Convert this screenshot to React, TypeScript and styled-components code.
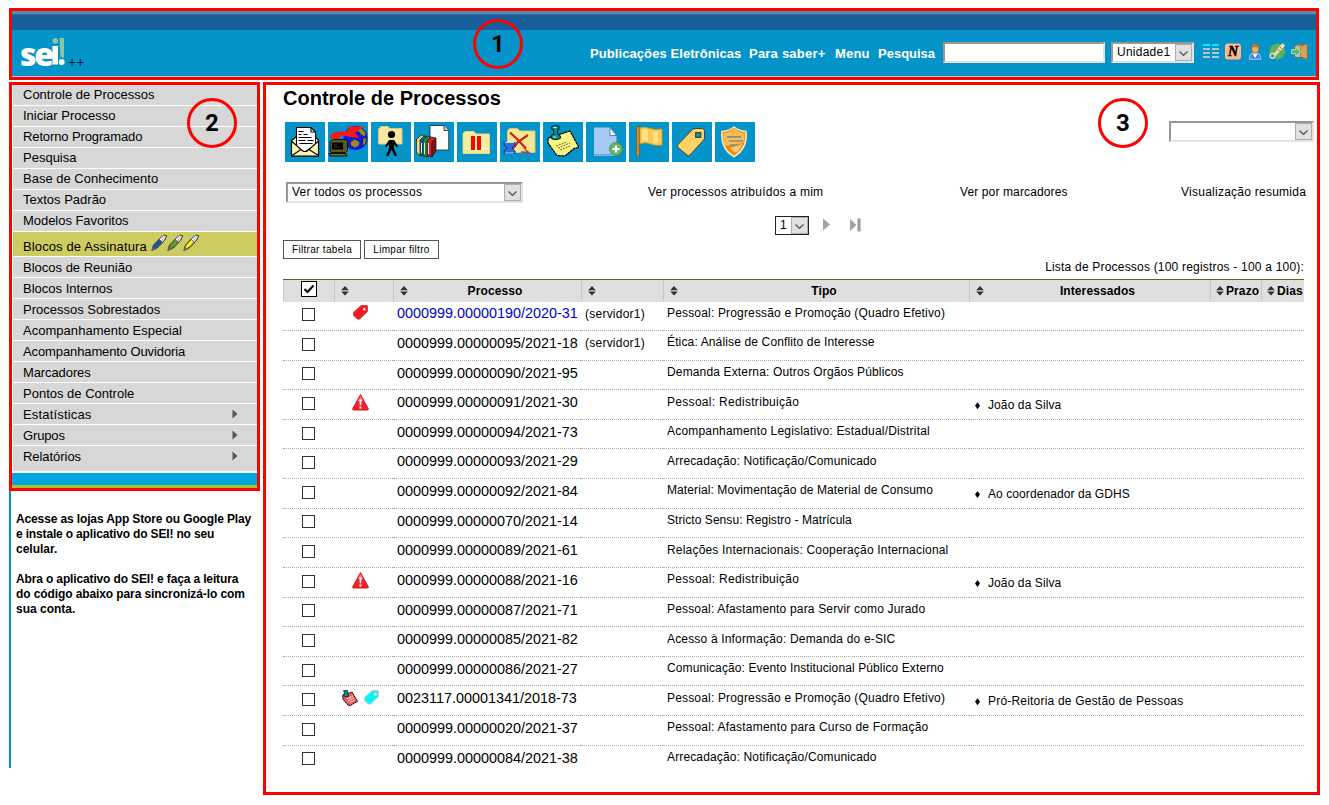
import React from "react";
import styled, { createGlobalStyle, css } from "styled-components";

const RED = "#ff0000";

const GlobalStyle = createGlobalStyle`
  * { box-sizing: border-box; }
  body {
    margin: 0;
    background: #fff;
    color: #000;
    font-family: "Liberation Sans", Arial, sans-serif;
    font-size: 12px;
    overflow: hidden;
  }
`;

/* ---------- page frame ---------- */

const Page = styled.div`
  width: 1329px;
  height: 805px;
  padding: 8px 9px 0;
`;

const Header = styled.header`
  position: relative;
  width: 1310px;
  height: 72px;
  border: 3px solid ${RED};
  background: #0594c9;
  display: flex;
  flex-direction: column;
`;

const TopStripe = styled.div`
  height: 19px;
  flex: none;
  background: #175f9a;
  border-top: 3px solid #5a89b0;
  box-shadow: inset 0 1px 0 #2f6fa5;
`;

const HeaderBar = styled.div`
  flex: 1;
  display: flex;
  align-items: flex-start;
  border-bottom: 1px solid #b9c9d2;
`;

const Brand = styled.div`
  display: flex;
  align-items: flex-start;
  width: 578px;
  padding: 7px 0 0 8px;
`;

const BrandPlus = styled.span`
  font-size: 14px;
  line-height: 16px;
  margin: 17px 0 0 2px;
  color: #06202b;
`;

const TopNav = styled.nav`
  display: flex;
  padding-top: 16px;
  color: #fff;
  font-weight: bold;
  font-size: 13px;
  line-height: 16px;
`;

const NavLink = styled.a<{ $w: number; $ls?: number }>`
  width: ${(p) => p.$w}px;
  white-space: nowrap;
  letter-spacing: ${(p) => p.$ls ?? 0.08}px;
`;

const insetBorder = css`
  border: 2px solid;
  border-color: #979797 #e3e3e3 #e3e3e3 #979797;
`;

const SearchInput = styled.input`
  ${insetBorder}
  width: 162px;
  height: 21px;
  margin-top: 12px;
  padding: 0 4px;
  background: #fff;
  outline: none;
`;

const SelectBox = styled.div<{ $w: number; $h?: number; $plain?: boolean }>`
  ${insetBorder}
  ${(p) => p.$plain && css`border: 1px solid #222;`}
  width: ${(p) => p.$w}px;
  height: ${(p) => p.$h ?? 21}px;
  flex: none;
  display: flex;
  justify-content: space-between;
  background: #fff;
  font-size: 12px;
  line-height: 17px;
  letter-spacing: 0.25px;
  padding-left: 4px;
`;

const SelectArrow = styled.span`
  width: 17px;
  height: 17px;
  flex: none;
  display: flex;
  align-items: center;
  justify-content: center;
  padding-top: 1px;
  background: #e1e1e1;
  border: 1px solid #adadad;
`;

const HeaderSelect = styled.div`
  margin: 12px 0 0 6px;
`;

const HeaderIcons = styled.div`
  display: flex;
  gap: 5px;
  margin: 13px 0 0 9px;
`;

const Columns = styled.div`
  display: flex;
  gap: 3px;
  align-items: flex-start;
  padding-top: 2px;
`;

/* ---------- sidebar ---------- */

const Sidebar = styled.aside`
  width: 251px;
`;

const MenuFrame = styled.div`
  position: relative;
  border: 3px solid ${RED};
  height: 409px;
  display: flex;
  flex-direction: column;
`;

const MenuList = styled.ul`
  list-style: none;
  margin: 0 0 0 1px;
  padding: 0;
`;

const MenuItem = styled.li<{ $active?: boolean; $last?: boolean; $low?: boolean; $ls?: number }>`
  display: flex;
  align-items: ${(p) => (p.$active ? "flex-end" : "flex-start")};
  height: ${(p) => (p.$active ? 25 : p.$last ? 27 : 21)}px;
  border-bottom: ${(p) => (p.$last ? 2 : 1)}px solid #fff;
  background: ${(p) => (p.$active ? "#cccc60" : "#d7d7d7")};
  padding: ${(p) => (p.$low ? 2 : 1)}px 19px 0 10px;
  font-size: 13px;
  line-height: ${(p) => (p.$active ? 19 : 18)}px;
  letter-spacing: ${(p) => p.$ls ?? 0}px;
`;

const Caret = styled.svg`
  margin: 3px 0 0 auto;
`;

const Pens = styled.span`
  display: flex;
  align-self: flex-start;
  margin: 1px 0 0 4px;
`;

const MenuFooter = styled.div`
  flex: 1;
  background: #02a5de;
  border-bottom: 3px solid #a2c62b;
`;

const AppNotice = styled.div`
  height: 277px;
  border-left: 2px solid #0594c9;
  padding: 21px 0 0 5px;
  font-weight: bold;
  font-size: 12px;
  line-height: 15px;
  white-space: nowrap;
  p { margin: 0 0 15px; }
`;

const NoticeLine = styled.span<{ $ls?: number }>`
  display: block;
  letter-spacing: ${(p) => p.$ls ?? 0}px;
`;

/* ---------- content ---------- */

const Content = styled.main`
  position: relative;
  width: 1057px;
  height: 713px;
  border: 3px solid ${RED};
  padding: 0 3px 0 17px;
`;

const Title = styled.h1`
  margin: 0;
  padding-top: 1px;
  height: 37px;
  font-size: 20px;
  line-height: 24px;
`;

const ToolRow = styled.div`
  display: flex;
  justify-content: space-between;
  align-items: flex-start;
  height: 60px;
  padding-left: 2px;
`;

const Tools = styled.div`
  display: flex;
  gap: 3px;
`;

const Tool = styled.button`
  width: 40px;
  height: 40px;
  padding: 0;
  border: 0;
  background: #0594c9;
  svg { display: block; }
`;

const SideSelect = styled.div`
  margin-top: -1px;
`;

const ViewRow = styled.div`
  display: flex;
  align-items: flex-start;
  height: 34px;
  padding-left: 3px;
`;

const ViewLink = styled.a<{ $gap: number; $w: number; $ls: number }>`
  margin-left: ${(p) => p.$gap}px;
  width: ${(p) => p.$w}px;
  line-height: 21px;
  white-space: nowrap;
  letter-spacing: ${(p) => p.$ls}px;
`;

const Pager = styled.div`
  display: flex;
  height: 24px;
  padding-left: 492px;
`;

const PagerIcon = styled.svg<{ $gap: number }>`
  margin: 2px 0 0 ${(p) => p.$gap}px;
`;

const Filters = styled.div`
  display: flex;
  gap: 3px;
`;

const FilterButton = styled.button<{ $w: number }>`
  width: ${(p) => p.$w}px;
  height: 19px;
  padding: 0;
  background: #fff;
  border: 1px solid #555;
  font: 10px/17px "Liberation Sans", Arial, sans-serif;
  letter-spacing: 0.32px;
  white-space: nowrap;
`;

const Caption = styled.div`
  height: 20px;
  line-height: 16px;
  text-align: right;
  padding-right: 10px;
  letter-spacing: 0.2px;
`;

const Table = styled.div`
  width: 1021px;
  border-top: 1px solid #4d6b0f;
`;

const gridColumns = css`
  display: grid;
  grid-template-columns: 51px 59px 188px 82px 306px 241px 51px 43px;
`;

const HeadRow = styled.div`
  ${gridColumns}
  height: 22px;
  margin-bottom: -0.6px;
  background: #dfdfdf;
  font-weight: bold;
`;

const HeadCell = styled.div<{ $tight?: boolean }>`
  display: flex;
  align-items: flex-start;
  height: 21px;
  border-left: 1px dotted #b5b5b5;
  padding: 2px 0 0 ${(p) => (p.$tight ? 6 : 7)}px;
  line-height: 18px;
  > svg { flex: none; margin: 4px 0 0 -1px; }
`;

const HeadLabel = styled.span<{ $tight?: boolean }>`
  flex: 1;
  text-align: ${(p) => (p.$tight ? "left" : "center")};
  padding-left: ${(p) => (p.$tight ? 2 : 1)}px;
  letter-spacing: 0.1px;
`;

const Row = styled.div`
  ${gridColumns}
  height: 29.62px;
  line-height: 16px;
  &:last-child > * { border-bottom-color: transparent; }
`;

const Cell = styled.div<{ $top?: number; $ls?: number }>`
  display: flex;
  align-items: flex-start;
  border-bottom: 1px dotted #aaa;
  padding: ${(p) => p.$top ?? 4}px 0 0 4px;
  letter-spacing: ${(p) => p.$ls ?? 0}px;
  white-space: nowrap;
`;

const CheckCell = styled(Cell)`
  padding: 6.8px 0 0 19px;
  margin-right: 1px;
`;

const IconCell = styled(Cell)`
  justify-content: center;
  gap: 6px;
  padding: 4px 6px 0 0;
`;

const NumberCell = styled(Cell)<{ $visited?: boolean }>`
  font-size: 14.4px;
  color: ${(p) => (p.$visited ? "#0000cc" : "#000")};
`;

const Check = styled.span`
  width: 13px;
  height: 13px;
  border: 1px solid #333;
  background: #fff;
`;

const CheckAll = styled.div`
  width: 16px;
  height: 16px;
  margin: -1px 0 0 10px;
  border: 1px solid #000;
  background: #fff;
  svg { display: block; }
`;

const Bullet = styled.i`
  width: 5px;
  height: 7px;
  margin: 5px 8px 0 2px;
  background: #000;
  clip-path: polygon(50% 0, 100% 50%, 50% 100%, 0 50%);
`;

const Marker = styled.div<{ $x: number; $y: number }>`
  position: absolute;
  left: ${(p) => p.$x}px;
  top: ${(p) => p.$y}px;
  width: 50px;
  height: 50px;
  border: 3px solid ${RED};
  border-radius: 50%;
  display: flex;
  align-items: center;
  justify-content: center;
  font: bold 24px/44px Roboto, sans-serif;
`;

/* ---------- drawings ---------- */

const Chevron = () => (
  <svg width="11" height="7" viewBox="0 0 11 7" fill="none" stroke="#555" strokeWidth="1.2">
    <path d="M1.5 1.5 5.5 5.3 9.5 1.5" />
  </svg>
);

const Select = ({ label, ...rest }: { label: string; $w: number; $h?: number; $plain?: boolean }) => (
  <SelectBox {...rest}>
    <span>{label}</span>
    <SelectArrow><Chevron /></SelectArrow>
  </SelectBox>
);

const SortIcon = () => (
  <svg width="8" height="10" viewBox="0 0 8 10" fill="#2b3236">
    <path d="M4 0 7.8 4.200H.2zM4 9.6 7.8 5.4H.2z" />
  </svg>
);

const LogoBox = styled.div`
  display: flex;
  width: 46px;
  height: 30px;
`;

const LogoText = styled.span`
  color: #fff;
  font: 800 32px/34px "Open Sans", sans-serif;
  letter-spacing: -2.2px;
  width: 32px;
  white-space: nowrap;
`;

const Logo = () => (
  <LogoBox>
    <LogoText>se</LogoText>
    <svg width="13" height="30" viewBox="0 0 13 30">
      <path d="M7.500 1H12v20l-3.500-1z" fill="#8cc69c" />
      <circle cx="3.300" cy="3.800" r="2.800" fill="#8cc69c" />
      <path d="M.500 9H6v18.500H.500z" fill="#fff" />
      <circle cx="9.700" cy="25" r="2.900" fill="#fff" />
    </svg>
  </LogoBox>
);

const Pen = ({ color }: { color: string }) => (
  <svg width="16" height="18" viewBox="0 0 16 18">
    <path d="M.8 16.500 2.500 11 10.500 2.800Q14 .3 15.600 1.600 15.800 4.500 7.500 13 4 15.500.8 16.500z" fill="#d4dae0" stroke="#3a3a3a" strokeWidth="1" />
    <path d="M2.300 12 8.300 5.500 11 8 7 12.600 3 15z" fill={color} stroke="#333" strokeWidth=".6" />
    <path d="m9 5.500 4-3.500" stroke="#fff" />
  </svg>
);

const Tag = ({ fill, stroke }: { fill: string; stroke: string }) => (
  <svg width="15" height="15" viewBox="0 0 15 15">
    <path d="M8 .7h6.300v5.800L6.500 14H4.500L.7 10.500V7.500z" fill={fill} stroke={stroke} strokeWidth="1" />
    <path d="M10 2.800h2.700v2.700H10z" fill="#fff" stroke={stroke} strokeWidth=".5" />
  </svg>
);

const Warning = () => (
  <svg width="17" height="17" viewBox="0 0 17 17">
    <path d="M8.500.6 16.400 15 15.800 16H1.200L.6 15z" fill="#f5222c" stroke="#d81620" strokeLinejoin="round" />
    <path d="M8.500 2 11 7 6 7z" fill="#ff8a8a" />
    <path d="M7.400 5.500h2.200L9.200 11.300H7.800zM7.500 12.500h2v2h-2z" fill="#fff" />
  </svg>
);

const RedNote = () => (
  <svg width="16" height="16" viewBox="0 0 16 16">
    <path d="M.7 5 10 2l5.500 9.500-3 1.500-4 2.500-2.500-.3-5-6z" fill="#f55a62" stroke="#000" strokeDasharray="2 .4" />
    <path d="m5 9 6-3M6 11l6-3M8 12.500l5-2.500" stroke="#fff" strokeDasharray="2 .6" />
    <path d="M1.600.6h4v3h.8v3H2v-3h.8z" fill="#168c92" stroke="#003c40" strokeWidth=".9" />
  </svg>
);

const HeaderGlyphs = () => (
  <HeaderIcons>
    <svg width="17" height="17" viewBox="0 0 17 17" shapeRendering="crispEdges">
      <path d="M0 2h7M9 2h7" stroke="#00f0f5" strokeWidth="2" />
      <path d="M0 6h7M9 6h7M0 10h7M9 10h7M0 14h7M9 14h7" stroke="#b9c2c6" strokeWidth="2" />
    </svg>
    <svg width="17" height="17" viewBox="0 0 17 17">
      <rect x="0" y=".5" width="16" height="16" rx="3" fill="#fdb98e" />
      <text x="8" y="13.200" textAnchor="middle" fontFamily="Liberation Serif, serif" fontStyle="italic" fontWeight="bold" fontSize="14" stroke="#000" strokeWidth=".5">N</text>
    </svg>
    <svg width="17" height="17" viewBox="0 0 17 17">
      <path d="M2.500 16.300Q2.200 9.500 8 9.500t5.800 6.800z" fill="#4d87e6" stroke="#bcd4f5" strokeWidth=".8" />
      <path d="m5.500 10.500 2.600 4.500 2.600-4.500z" fill="#fff" />
      <ellipse cx="8.200" cy="5.800" rx="3.400" ry="4.200" fill="#f3ae55" stroke="#b06c1c" strokeWidth=".7" />
      <path d="M4.700 5Q5 .8 8.300.8t3.700 4.200Q8.500 2.800 4.700 5z" fill="#b5762c" />
    </svg>
    <svg width="17" height="17" viewBox="0 0 17 17">
      <circle cx="8.300" cy="8.600" r="7.800" fill="#5bb558" />
      <path d="M3 14 9 8.500" stroke="#ddd" strokeWidth="3" />
      <path d="M9.500 7.500 13.800 2.500" stroke="#f7dcc4" strokeWidth="3.600" strokeLinecap="round" />
      <path d="m8.500 6 3.500 3M11 4l2 2" stroke="#d2522b" />
      <circle cx="3.400" cy="12.800" r="2.300" fill="#3e8d41" stroke="#d7d7d7" strokeWidth="1.600" />
    </svg>
    <svg width="18" height="17" viewBox="0 0 18 17">
      <path d="M3.500 1H17v13.500H3.500z" fill="#79705a" />
      <path d="M5 2.500h6v11.500H5z" fill="#c4b998" />
      <path d="M9.500 3 16.200 1v15.400L9.500 13.500z" fill="#d0a25f" stroke="#94662a" strokeWidth=".6" />
      <path d="M.6 6.600h4V4l5 4.700-5 4.600v-2.600h-4z" fill="#5bb95c" stroke="#d6efd6" strokeWidth=".7" />
    </svg>
  </HeaderIcons>
);

const toolArt: { name: string; art: React.ReactNode }[] = [
  {
    name: "Enviar Processo",
    art: (
      <g stroke="#000" strokeWidth="1.1">
        <path d="M6.500 18.500 12 14h17l4.500 4V34h-27z" fill="#f6f2a0" />
        <path d="M11.500 26V5.500H26L30.500 10v13L20 30z" fill="#fff" />
        <path d="M26 5.500V10h4.500M13.500 9.500h5M13.500 12.500h3m2 0h4M13.500 15.500h13M13.500 18.500h7m2 0h6M14.500 21.500h13" fill="none" />
        <path d="M6.500 19v15h27V19L24 27.500l-2.500 2h-3L16 27.500z" fill="#f9f5ac" />
        <path d="m7 33.500 9-6M33.500 33.500 24 27.500" fill="none" />
      </g>
    ),
  },
  {
    name: "Atualizar Andamento",
    art: (
      <g>
        <circle cx="27.500" cy="16" r="12" fill="#0a18f4" />
        <path d="M27 4.500 34 6l4 5-1 4-4-2-2-3-5-1zM22 20l5-3 5 3-1 4-4 2-4-2zM35 16l3.500 0-1 6-3 2z" fill="#9b8137" stroke="#111" strokeWidth=".6" />
        <path d="M2 16q1-5 5-6l11-.500 3-3.500-1.500-1.500L36 4.500 27 11l4.500 5-9-1-8-1.500-6 4z" fill="#fb1515" />
        <path d="M2 19.500 5 17.500h13l1.500 2v9l-2 2H3l-1-2z" fill="#5b5a1c" stroke="#111" />
        <path d="M4 20.500h11v7H4z" fill="#050505" />
        <path d="M1 31.500h17l1 2.500H2z" fill="#77712e" stroke="#111" />
        <path d="m6 23 3 0M6 25h5" stroke="#2c3f1b" />
      </g>
    ),
  },
  {
    name: "Atribuição de Processos",
    art: (
      <g>
        <path d="M7.500 7 10 4.500h7l2 2h12V22H7.500z" fill="#f5e6a0" stroke="#dcc878" />
        <circle cx="20.500" cy="12.500" r="3.600" />
        <path d="M18 18h5l4 6-1 1.200-3-3v4.300l3 7-2.200.7-3.300-6.500-3.300 6.500-2.200-.7 3-7v-4.300l-3 3-1-1.200z" />
      </g>
    ),
  },
  {
    name: "Incluir Documento",
    art: (
      <g stroke="#222" strokeWidth=".8">
        <path d="M16 3.500h14l4.700 5V28H16z" fill="#fff" />
        <path d="M30 3.500v5h4.700" fill="#cfcfcf" />
        <path d="m2.500 17 5-4 3.500 1-3 4v16l-5-2z" fill="#e8d850" />
        <path d="m6 18 4-4 4 1-3 3v16l-5-1z" fill="#135cc8" />
        <path d="m9 18 4-4 4 1-3 3v17l-5-1z" fill="#0e9430" />
        <path d="m13 19 4-4 5 1-4 4v15l-5-2z" fill="#e01924" />
        <path d="m18 20 4-4v13l-4 6z" fill="#8d0c14" />
        <path d="M4 20v10M7.500 21v10M10.500 21v11M14.500 21v11" stroke="#fff" strokeWidth=".9" />
      </g>
    ),
  },
  {
    name: "Sobrestar Processo",
    art: (
      <g>
        <path d="M6 11.500 8 9.500h9l2 2.500h13.500v19.500H6z" fill="#f7eda2" stroke="#e5d47c" />
        <path d="M7 26.500h25" stroke="#fffbd8" />
        <path d="M14 14h4v14h-4zM20 14h4v14h-4z" fill="#fb0505" />
      </g>
    ),
  },
  {
    name: "Concluir Processo",
    art: (
      <g>
        <path d="M7.500 9 9.500 6.500h8l2 2.500H35v21.500H7.500z" fill="#f5e695" stroke="#dcc468" />
        <path d="M10 10.500 17 17l9 9.500M28 13 18 20l-6 7.500" fill="none" stroke="#cf2415" strokeWidth="2.300" />
        <path d="M4 20.500h11v2.500l-3 3 3 3v2.500H4V29l3-3-3-3z" fill="#276ce0" stroke="#103b8c" />
        <path d="M5 20.500h9M5 31h9" stroke="#bcd9ff" />
        <path d="m24 26 5 5m-8-1 9 .500" stroke="#c9372a" strokeWidth="1.300" />
      </g>
    ),
  },
  {
    name: "Anotações",
    art: (
      <g>
        <path d="M5 16 27 9l9 16.500-5 1-9 7.500-8-.500L5 21z" fill="#f7f588" stroke="#000" strokeWidth="1.200" strokeDasharray="3 .5" />
        <path d="m13 24 11-4M15 26l12-5M17 28l10-4" stroke="#6b6b17" strokeDasharray="2 1" />
        <path d="M8 15.500q0-3 3-3.500l-.500-4Q8 7 8.500 5q1-1.500 4-1.500T16.500 5q0 2-2 3v4q3 1 3 4-1 1.500-4.700 1.500T8 15.500z" fill="#158c8e" stroke="#00292b" strokeWidth="1.200" />
        <path d="M10.500 5.500h3M10 15h3" stroke="#a5f6f2" strokeWidth="1.200" />
      </g>
    ),
  },
  {
    name: "Iniciar Processo",
    art: (
      <g>
        <path d="M8 5.500h16l6.500 8V32.500H8z" fill="#a7caf5" />
        <path d="M24 5.500v8h6.500z" fill="#fff" stroke="#3d6da8" strokeWidth=".8" />
        <path d="M8 33.500h22" stroke="#8fb4d8" />
        <circle cx="30" cy="27" r="6.500" fill="#6ab36b" stroke="#3f8b49" strokeWidth=".8" />
        <path d="M30 23.500v7M26.500 27h7" stroke="#fff" strokeWidth="2.200" />
      </g>
    ),
  },
  {
    name: "Bandeira",
    art: (
      <g>
        <path d="M7.500 4.500h2.800v29.500H7.500z" fill="#c99040" stroke="#7d5114" strokeWidth=".7" />
        <path d="M11 6q5-1.500 10 .500 6 2 12 .500v16q-6 1-11-1t-11-.500z" fill="#fbcb4e" stroke="#dc9c1c" strokeWidth=".8" />
        <path d="M13 7.500q4-.500 6 .500v11q-3-.700-6 0zM24 9.500q3 .500 5 .200v11q-3 0-5-.500z" fill="#fde08a" />
      </g>
    ),
  },
  {
    name: "Marcador",
    art: (
      <g stroke="#45423a" strokeWidth="1">
        <path d="M23 6.500h7.500l2 2V17L18 33q-1.500 1.500-3 0L6 25.500q-1-1.500 0-3L20.500 7.500z" fill="#fcd263" />
        <path d="M23.700 10.700h5v4.600h-5z" fill="#0594c9" strokeWidth="1.300" />
      </g>
    ),
  },
  {
    name: "Controle de Prazos",
    art: (
      <g>
        <path d="M19 5q5 4 12 4.500Q32.500 27 19 34.500 5.500 27 7 9.500 14 9 19 5z" fill="#ea8c12" stroke="#fbe6bd" strokeWidth="1.600" />
        <path d="M19 6.500q5 4 10.500 4.500Q30 17 28 21L9.500 24Q8 18 8.500 11 14 11 19 6.500z" fill="#f9bd55" />
        <path d="M15 26q4 5 7 4 4-3 5-8z" fill="#fff0a8" opacity=".6" />
        <path d="M12 14.800h14M14 19h14M15 23h8" stroke="#8c8a80" strokeWidth="1.700" />
      </g>
    ),
  },
];

/* ---------- data ---------- */

const menu: { label: string; pens?: boolean; sub?: boolean; ls?: number }[] = [
  { label: "Controle de Processos" },
  { label: "Iniciar Processo" },
  { label: "Retorno Programado", ls: -0.12 },
  { label: "Pesquisa" },
  { label: "Base de Conhecimento" },
  { label: "Textos Padrão" },
  { label: "Modelos Favoritos", ls: -0.04 },
  { label: "Blocos de Assinatura", pens: true, ls: 0.12 },
  { label: "Blocos de Reunião" },
  { label: "Blocos Internos" },
  { label: "Processos Sobrestados" },
  { label: "Acompanhamento Especial", ls: 0.03 },
  { label: "Acompanhamento Ouvidoria", ls: -0.11 },
  { label: "Marcadores", ls: -0.1 },
  { label: "Pontos de Controle" },
  { label: "Estatísticas", sub: true, ls: 0.17 },
  { label: "Grupos", sub: true, ls: -0.15 },
  { label: "Relatórios", sub: true, ls: -0.05 },
];

type Process = {
  num: string;
  tipo: string;
  ls?: number;
  who?: string;
  icon?: "tag" | "warn" | "note";
  party?: string;
  partyLs?: number;
};

const processes: Process[] = [
  { num: "0000999.00000190/2020-31", tipo: "Pessoal: Progressão e Promoção (Quadro Efetivo)", who: "(servidor1)", icon: "tag" },
  { num: "0000999.00000095/2021-18", tipo: "Ética: Análise de Conflito de Interesse", ls: 0.14, who: "(servidor1)" },
  { num: "0000999.00000090/2021-95", tipo: "Demanda Externa: Outros Orgãos Públicos", ls: 0.15 },
  { num: "0000999.00000091/2021-30", tipo: "Pessoal: Redistribuição", ls: 0.3, icon: "warn", party: "João da Silva", partyLs: 0.1 },
  { num: "0000999.00000094/2021-73", tipo: "Acompanhamento Legislativo: Estadual/Distrital", ls: 0.19 },
  { num: "0000999.00000093/2021-29", tipo: "Arrecadação: Notificação/Comunicado", ls: 0.14 },
  { num: "0000999.00000092/2021-84", tipo: "Material: Movimentação de Material de Consumo", ls: 0.1, party: "Ao coordenador da GDHS", partyLs: 0.08 },
  { num: "0000999.00000070/2021-14", tipo: "Stricto Sensu: Registro - Matrícula", ls: 0.06 },
  { num: "0000999.00000089/2021-61", tipo: "Relações Internacionais: Cooperação Internacional", ls: 0.19 },
  { num: "0000999.00000088/2021-16", tipo: "Pessoal: Redistribuição", ls: 0.3, icon: "warn", party: "João da Silva", partyLs: 0.1 },
  { num: "0000999.00000087/2021-71", tipo: "Pessoal: Afastamento para Servir como Jurado" },
  { num: "0000999.00000085/2021-82", tipo: "Acesso à Informação: Demanda do e-SIC" },
  { num: "0000999.00000086/2021-27", tipo: "Comunicação: Evento Institucional Público Externo", ls: 0.11 },
  { num: "0023117.00001341/2018-73", tipo: "Pessoal: Progressão e Promoção (Quadro Efetivo)", icon: "note", party: "Pró-Reitoria de Gestão de Pessoas", partyLs: 0.2 },
  { num: "0000999.00000020/2021-37", tipo: "Pessoal: Afastamento para Curso de Formação", ls: 0.2 },
  { num: "0000999.00000084/2021-38", tipo: "Arrecadação: Notificação/Comunicado", ls: 0.14 },
];

const ProcessRow = ({ p, first }: { p: Process; first: boolean }) => (
  <Row>
    <CheckCell><Check /></CheckCell>
    <IconCell>
      {p.icon === "tag" && <Tag fill="#ee1c25" stroke="#ee1c25" />}
      {p.icon === "warn" && <Warning />}
      {p.icon === "note" && <><RedNote /><Tag fill="#00f6fb" stroke="#b8c4c4" /></>}
    </IconCell>
    <NumberCell $visited={first}>{p.num}</NumberCell>
    <Cell $top={4.4} $ls={0.24}>{p.who}</Cell>
    <Cell $top={3.4} $ls={p.ls ?? 0.17}>{p.tipo}</Cell>
    <Cell $top={7} $ls={p.partyLs}>{p.party && <><Bullet />{p.party}</>}</Cell>
    <Cell />
    <Cell />
  </Row>
);

export default function App() {
  const activeIndex = menu.findIndex((m) => m.pens);
  return (
    <Page>
      <GlobalStyle />
      <Header>
        <TopStripe />
        <HeaderBar>
          <Brand>
            <Logo />
            <BrandPlus>++</BrandPlus>
          </Brand>
          <TopNav>
            <NavLink $w={159}>Publicações Eletrônicas</NavLink>
            <NavLink $w={86} $ls={0.22}>Para saber+</NavLink>
            <NavLink $w={43} $ls={0.2}>Menu</NavLink>
            <NavLink $w={65} $ls={0}>Pesquisa</NavLink>
          </TopNav>
          <SearchInput />
          <HeaderSelect><Select label="Unidade1" $w={83} /></HeaderSelect>
          <HeaderGlyphs />
        </HeaderBar>
        <Marker $x={461} $y={8}>1</Marker>
      </Header>

      <Columns>
        <Sidebar>
          <MenuFrame>
            <MenuList>
              {menu.map((m, i) => (
                <MenuItem key={m.label} $active={m.pens} $last={i === menu.length - 1} $low={i > activeIndex} $ls={m.ls}>
                  {m.label}
                  {m.pens && <Pens><Pen color="#0f58a8" /><Pen color="#5da02c" /><Pen color="#f6ee12" /></Pens>}
                  {m.sub && (
                    <Caret width="6" height="10" viewBox="0 0 6 10"><path d="M.5.5 5.500 5 .5 9.500z" fill="#555" /></Caret>
                  )}
                </MenuItem>
              ))}
            </MenuList>
            <MenuFooter />
            <Marker $x={175} $y={13}>2</Marker>
          </MenuFrame>
          <AppNotice>
            <p>
              <NoticeLine $ls={-0.13}>Acesse as lojas App Store ou Google Play</NoticeLine>
              <NoticeLine $ls={-0.16}>e instale o aplicativo do SEI! no seu</NoticeLine>
              <NoticeLine>celular.</NoticeLine>
            </p>
            <p>
              <NoticeLine $ls={-0.14}>Abra o aplicativo do SEI! e faça a leitura</NoticeLine>
              <NoticeLine $ls={-0.1}>do código abaixo para sincronizá-lo com</NoticeLine>
              <NoticeLine>sua conta.</NoticeLine>
            </p>
          </AppNotice>
        </Sidebar>

        <Content>
          <Title>Controle de Processos</Title>
          <ToolRow>
            <Tools>
              {toolArt.map((t) => (
                <Tool key={t.name} aria-label={t.name}>
                  <svg width="40" height="40" viewBox="0 0 40 40">{t.art}</svg>
                </Tool>
              ))}
            </Tools>
            <SideSelect><Select label="" $w={145} /></SideSelect>
          </ToolRow>
          <ViewRow>
            <Select label="Ver todos os processos" $w={237} />
            <ViewLink $gap={125} $w={176} $ls={0.24}>Ver processos atribuídos a mim</ViewLink>
            <ViewLink $gap={136} $w={108} $ls={0.12}>Ver por marcadores</ViewLink>
            <ViewLink $gap={113} $w={126} $ls={0.25}>Visualização resumida</ViewLink>
          </ViewRow>
          <Pager>
            <Select label="1" $w={34} $h={19} $plain />
            <PagerIcon $gap={13} width="9" height="13" viewBox="0 0 9 13"><path d="M1 .5 8 6.500 1 12.500z" fill="#a2a2a2" /></PagerIcon>
            <PagerIcon $gap={18} width="13" height="14" viewBox="0 0 13 14"><path d="M1 1 7.500 7 1 13z" fill="#a2a2a2" /><path d="M8.500.500h3v13h-3z" fill="#999" /></PagerIcon>
          </Pager>
          <Filters>
            <FilterButton $w={78}>Filtrar tabela</FilterButton>
            <FilterButton $w={75}>Limpar filtro</FilterButton>
          </Filters>
          <Caption>Lista de Processos (100 registros - 100 a 100):</Caption>
          <Table>
            <HeadRow>
              <HeadCell>
                <CheckAll>
                  <svg width="14" height="14" viewBox="0 0 14 14" fill="none" stroke="#000" strokeWidth="2"><path d="M2.500 7 5.500 10 11.500 3.500" /></svg>
                </CheckAll>
              </HeadCell>
              <HeadCell><SortIcon /></HeadCell>
              <HeadCell><SortIcon /><HeadLabel>Processo</HeadLabel></HeadCell>
              <HeadCell><SortIcon /></HeadCell>
              <HeadCell><SortIcon /><HeadLabel>Tipo</HeadLabel></HeadCell>
              <HeadCell><SortIcon /><HeadLabel>Interessados</HeadLabel></HeadCell>
              <HeadCell $tight><SortIcon /><HeadLabel $tight>Prazo</HeadLabel></HeadCell>
              <HeadCell $tight><SortIcon /><HeadLabel $tight>Dias</HeadLabel></HeadCell>
            </HeadRow>
            {processes.map((p, i) => <ProcessRow key={p.num} p={p} first={i === 0} />)}
          </Table>
          <Marker $x={832} $y={13}>3</Marker>
        </Content>
      </Columns>
    </Page>
  );
}
